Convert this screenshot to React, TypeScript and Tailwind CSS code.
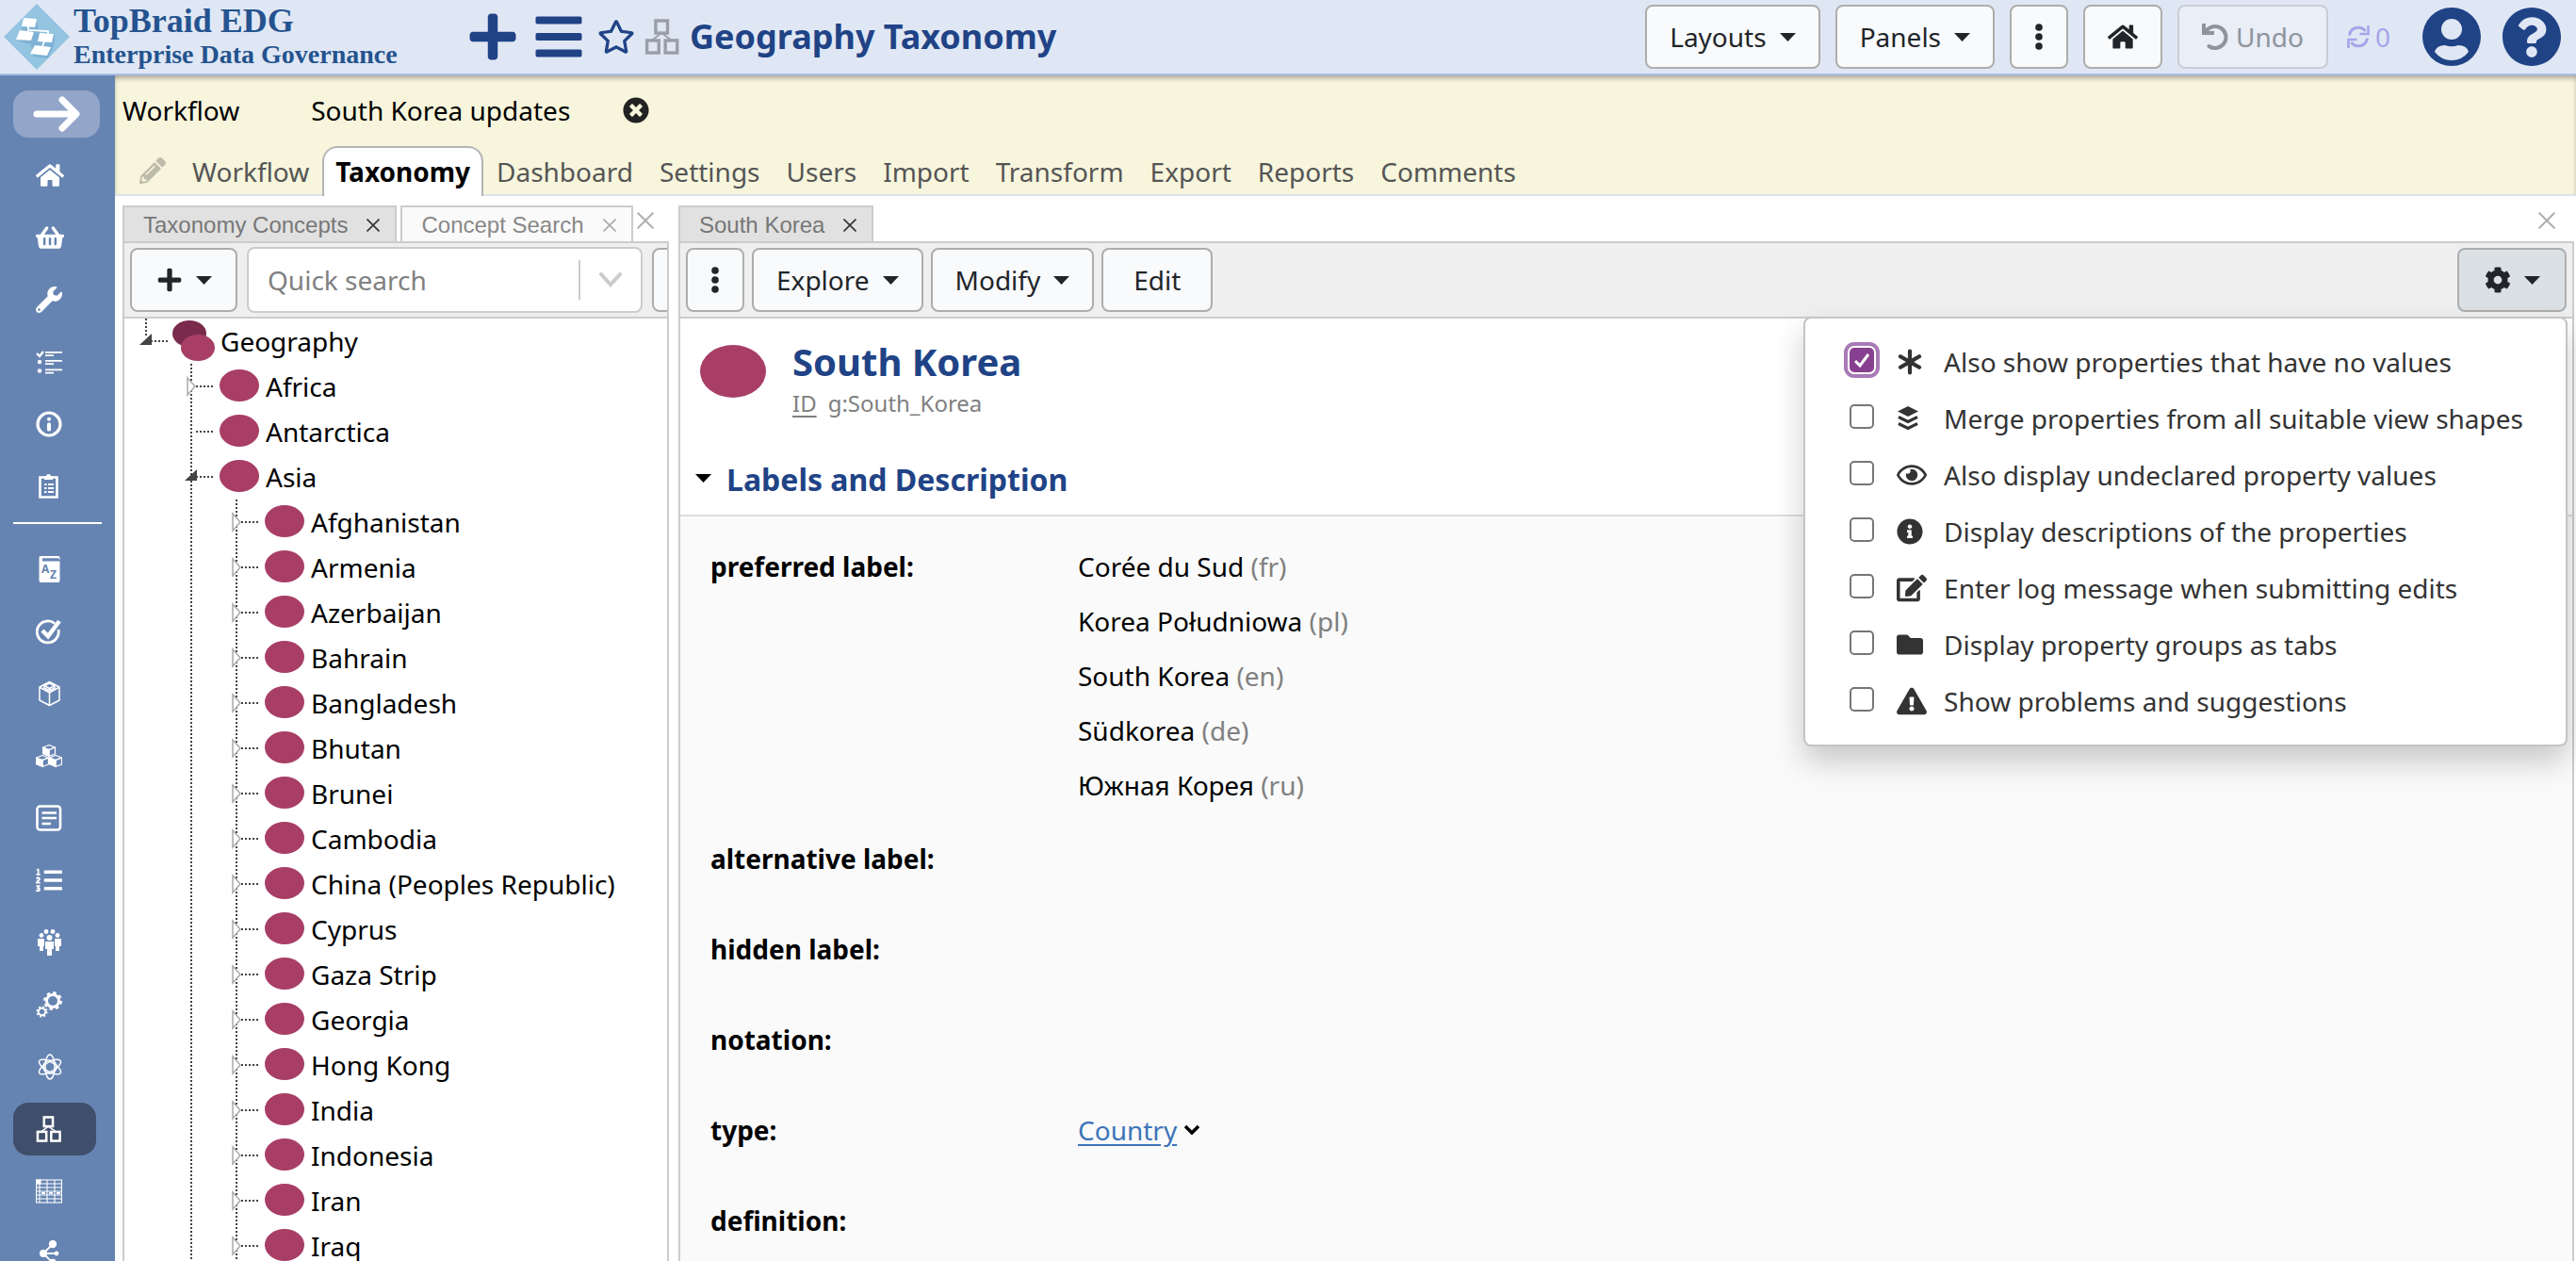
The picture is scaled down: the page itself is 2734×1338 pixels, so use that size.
import { type ReactNode } from 'react';
import {
  FaBars,
  FaCog,
  FaEdit,
  FaExclamationTriangle,
  FaFolder,
  FaHome,
  FaInfoCircle,
  FaListOl,
  FaPencilAlt,
  FaPlus,
  FaQuestionCircle,
  FaRegEye,
  FaRegStar,
  FaShoppingBasket,
  FaTimesCircle,
  FaWrench,
} from 'react-icons/fa';

// ============= Data =============

const NAV_TABS = ['Workflow', 'Taxonomy', 'Dashboard', 'Settings', 'Users', 'Import', 'Transform', 'Export', 'Reports', 'Comments'];

const COUNTRIES = [
  'Afghanistan', 'Armenia', 'Azerbaijan', 'Bahrain', 'Bangladesh', 'Bhutan', 'Brunei', 'Cambodia',
  'China (Peoples Republic)', 'Cyprus', 'Gaza Strip', 'Georgia', 'Hong Kong', 'India', 'Indonesia', 'Iran', 'Iraq',
];

const PREF_LABELS = [
  { text: 'Corée du Sud', lang: 'fr' },
  { text: 'Korea Południowa', lang: 'pl' },
  { text: 'South Korea', lang: 'en' },
  { text: 'Südkorea', lang: 'de' },
  { text: 'Южная Корея', lang: 'ru' },
];

// ============= Icons =============

function HierarchyIcon({ className }: { className?: string }) {
  return (
    <svg className={className} viewBox="0 0 28 29" fill="none" stroke="currentColor" strokeWidth={2.6}>
      <rect x="8.6" y="1.5" width="9.6" height="10" />
      <rect x="1.5" y="17.5" width="9.6" height="10" />
      <rect x="16.4" y="17.5" width="9.6" height="10" />
      <path d="M6 17l7.4-5.5L21 17" strokeWidth={1.4} />
    </svg>
  );
}

function LogoIcon() {
  return (
    <svg className="h-[70px] w-[70px] shrink-0" viewBox="0 0 70 70">
      <path d="M35 0l35 35-35 35L0 35z" fill="#93c4e0" />
      <path d="M21 18l14 1 3 12 16 1-1 12-6 14-16-2-2-13-13-3z" fill="#6fa5cd" opacity={0.6} />
      <g fill="#fff">
        <path d="M21 15l14 1-2 9-14-1z" />
        <path d="M17 28l15 2-3 9-16-1z" />
        <path d="M38 31l15 1-2 9-15-1z" />
        <path d="M33 44l17 2-4 9-18-2z" />
      </g>
      <path d="M26 24v4l21 1v4M43 40l-2 5" stroke="#fff" strokeWidth={1.8} fill="none" />
    </svg>
  );
}

const sideIcon = 'h-7 w-7';

function TaskListIcon() {
  return (
    <svg className={sideIcon} viewBox="0 0 28 28" fill="currentColor">
      <path d="M1 5l3 3 4-5" stroke="currentColor" strokeWidth={2.4} fill="none" />
      <circle cx="4" cy="14" r="2.2" />
      <circle cx="4" cy="23.5" r="2.2" />
      <path d="M10 3h18v1.8H10zM10 6.2h9V8h-9zM10 12h18v1.8H10zM10 15.2h9V17h-9zM10 21.5h18v1.8H10zM10 24.7h9v1.8h-9z" />
    </svg>
  );
}

function InfoRingIcon() {
  return (
    <svg className={sideIcon} viewBox="0 0 28 28" fill="currentColor">
      <circle cx="14" cy="14" r="12" fill="none" stroke="currentColor" strokeWidth={3.2} />
      <circle cx="14" cy="8.8" r="2" />
      <rect x="12" y="12.5" width="4" height="9" rx="1.5" />
    </svg>
  );
}

function ClipboardIcon() {
  return (
    <svg className={sideIcon} viewBox="0 0 28 28" fill="currentColor">
      <path d="M4.5 4.5h18v21h-18z" fill="none" stroke="currentColor" strokeWidth={2.6} />
      <path d="M9 7V3h2a2.6 2.6 0 015 0h2v4z" />
      <path d="M9 11h2.5v2H9zM13 11h6v2h-6zM9 15h2.5v2H9zM13 15h6v2h-6zM9 19h2.5v2H9zM13 19h6v2h-6z" />
    </svg>
  );
}

function GlossaryIcon() {
  return (
    <svg className={sideIcon} viewBox="0 0 28 28">
      <path d="M5 0h19q1.500 0 1.500 2v2.500q-.5-2-2-2.300H7v3.300h18.500V26q0 2-2 2H5.500q-2 0-2-2V2Q3.500 0 5 0z" fill="currentColor" />
      <text x="6" y="18" fontSize="12" className="fill-[#6684b2] font-bold">A</text>
      <text x="15" y="24" fontSize="12" className="fill-[#6684b2] font-bold">Z</text>
    </svg>
  );
}

function CheckRingIcon() {
  return (
    <svg className={sideIcon} viewBox="0 0 28 28" fill="none" stroke="currentColor">
      <path d="M20 5.500A11.500 11.500 0 1024 12" strokeWidth={2.8} />
      <path d="M7 13l6 6L25 3" strokeWidth={4.5} />
    </svg>
  );
}

function CubeIcon() {
  return (
    <svg className={sideIcon} viewBox="0 0 28 28" fill="none" stroke="currentColor" strokeWidth={1.5} strokeLinejoin="round">
      <path d="M14.5 1.5L25 7v14l-10.5 5.500L4 21V7zM4 7l10.500 6L25 7M14.500 13v13.500" />
      <path d="M9 5.500l5.500-2.500L20 5.500V8l-5.500 3L9 8zM9 5.500l5.500 3 5.500-3M14.500 8.500V11" />
    </svg>
  );
}

function CubesIcon() {
  return (
    <svg className={sideIcon} viewBox="0 0 28 28" fill="currentColor" stroke="currentColor" strokeLinejoin="round">
      {['translate(7.5 2)', 'translate(.5 13)', 'translate(14.5 13)'].map((t) => (
        <g key={t} transform={t}>
          <path d="M0 3l6.500-2.500L13 3l-6.500 2.500z" fill="none" strokeWidth={1.2} />
          <path d="M0 3l6.500 2.500v7L0 10z" />
          <path d="M13 3L6.500 5.500v7L13 10z" fill="none" strokeWidth={1.3} />
        </g>
      ))}
    </svg>
  );
}

function NoteIcon() {
  return (
    <svg className={sideIcon} viewBox="0 0 28 28" fill="none" stroke="currentColor" strokeWidth={2.6}>
      <rect x="1.5" y="1.5" width="24.5" height="25" rx="3" />
      <path d="M6.500 8.500H22M6.500 14H22M6.500 20H16" />
    </svg>
  );
}

function PeopleIcon() {
  return (
    <svg className={sideIcon} viewBox="0 0 28 28" fill="currentColor">
      <circle cx="11" cy="2.5" r="2.4" />
      <circle cx="18" cy="2.5" r="2.4" />
      <circle cx="6" cy="6.5" r="2.4" />
      <circle cx="23" cy="6.5" r="2.4" />
      <circle cx="14.5" cy="9" r="3" />
      <path d="M10 13h9v8h-2v7h-5v-7h-2zM2 10h7v8h-1v5H4v-5H2zM27 10h-7v8h1v5h4v-5h2z" />
    </svg>
  );
}

function GearsIcon() {
  return (
    <svg className={sideIcon} viewBox="0 0 28 28" fill="none" stroke="currentColor">
      <circle cx="18" cy="10" r="6.5" strokeWidth={3} />
      <circle cx="18" cy="10" r="8.7" strokeWidth={2.6} strokeDasharray="3.500 3.330" />
      <circle cx="6.5" cy="21.5" r="3.7" strokeWidth={2} />
      <circle cx="6.5" cy="21.5" r="5.2" strokeWidth={1.8} strokeDasharray="2.100 1.984" />
    </svg>
  );
}

function AtomIcon() {
  return (
    <svg className={sideIcon} viewBox="0 0 28 28" fill="none" stroke="currentColor" strokeWidth={1.5}>
      <ellipse cx="15" cy="14" rx="5" ry="13" />
      <ellipse cx="15" cy="14" rx="5" ry="13" transform="rotate(60 15 14)" />
      <ellipse cx="15" cy="14" rx="5" ry="13" transform="rotate(120 15 14)" />
      <circle cx="15" cy="14" r="7" />
    </svg>
  );
}

function GridIcon() {
  return (
    <svg className={sideIcon} viewBox="0 0 28 28" fill="none" stroke="currentColor" strokeWidth={1.1}>
      <rect x=".6" y="2" width="26.800" height="24" />
      <path d="M4 2v24M12 2v24M20 2v24M0 6h28M0 10h28M0 14h28M0 18h28M0 22h28" />
      <path d="M6 16h4M14 16h4M22 16h4" strokeWidth={2} />
      <path d="M0 2h5v4H0z" fill="currentColor" />
    </svg>
  );
}

function ShareIcon() {
  return (
    <svg className={sideIcon} viewBox="0 0 28 28" fill="currentColor">
      <circle cx="8" cy="14" r="4" />
      <circle cx="18" cy="4" r="4.2" />
      <circle cx="22" cy="14" r="2.4" />
      <circle cx="18" cy="24" r="4.2" />
      <path d="M8 14l10-10M8 14h14M8 14l10 10" stroke="currentColor" strokeWidth={1.8} />
    </svg>
  );
}

function AsteriskIcon() {
  return (
    <svg className="h-7 w-7" viewBox="0 0 28 28" fill="none" stroke="currentColor" strokeWidth={4.2} strokeLinecap="round">
      <path d="M14 2.500v23M4 8.300l20 11.400M24 8.300L4 19.700" />
    </svg>
  );
}

function LayersIcon() {
  return (
    <svg className="h-[26px] w-[26px]" viewBox="0 0 26 26" fill="currentColor">
      <path d="M12 0l11 5.500L12 11 1 5.500z" />
      <path d="M2 11.500l10 5 10-5M2 18.500l10 5 10-5" fill="none" stroke="currentColor" strokeWidth={3.2} />
    </svg>
  );
}

function DotsIcon() {
  return (
    <svg className="h-7 w-2" viewBox="0 0 8 28" fill="currentColor">
      <circle cx="4" cy="4" r="3.8" />
      <circle cx="4" cy="14" r="3.8" />
      <circle cx="4" cy="24" r="3.8" />
    </svg>
  );
}

function Caret() {
  return (
    <svg className="h-[9px] w-[17px]" viewBox="0 0 17 9" fill="currentColor">
      <path d="M0 0h17L8.500 9z" />
    </svg>
  );
}

function UndoIcon() {
  return (
    <svg className="h-7 w-7" viewBox="0 0 28 28" fill="none" stroke="currentColor" strokeWidth={4}>
      <path d="M2 0v10h11" />
      <path d="M4.500 8A11.500 11.500 0 117.500 24" strokeLinecap="round" />
    </svg>
  );
}

function UserIcon() {
  return (
    <svg className="h-[62px] w-[62px]" viewBox="0 0 62 62">
      <circle cx="31" cy="31" r="31" fill="#204386" />
      <circle cx="31" cy="23" r="11" fill="#e0e7f4" />
      <path d="M13 47q2-7 11-7 7 2.500 14 0 9 0 11 7-7 9-18 9t-18-9z" fill="#e0e7f4" />
    </svg>
  );
}

function RefreshIcon() {
  return (
    <svg className="h-6 w-6" viewBox="0 0 24 24" fill="none" stroke="currentColor" strokeWidth={3}>
      <path d="M2.500 10.500A9.500 9.500 0 0119.500 6M21.500 13.500A9.500 9.500 0 014.500 18" />
      <path d="M22.500 0v9h-9M1.500 24v-9h9" strokeWidth={2.6} />
    </svg>
  );
}

function CloseMark({ className }: { className: string }) {
  return (
    <svg className={className} viewBox="0 0 14 14" fill="none" stroke="currentColor" strokeWidth={1.6}>
      <path d="M.5.5l13 13M13.500.5l-13 13" />
    </svg>
  );
}

// ============= Shared controls =============

function ToolButton({ children, className = 'px-6', label }: { children: ReactNode; className?: string; label?: string }) {
  return (
    <button
      type="button"
      aria-label={label}
      className={`flex h-[68px] shrink-0 items-center justify-center gap-3.5 rounded-lg border-2 border-[#adadad] bg-[#f9fafc] text-[#212529] ${className}`}
    >
      {children}
    </button>
  );
}

function PanelTab({ title, active = false }: { title: string; active?: boolean }) {
  return (
    <div
      className={`flex h-10 items-center gap-5 border-2 border-b-0 border-[#ccc] pl-5 pr-4 font-['Liberation_Sans',sans-serif] text-[24px] ${
        active ? 'bg-[#e1e1e1] text-[#777]' : 'bg-[#fafafa] text-[#888]'
      }`}
    >
      {title}
      <button type="button" aria-label={`Close ${title}`} className={active ? 'text-[#333]' : 'text-[#aaa]'}>
        <CloseMark className="h-3.5 w-3.5" />
      </button>
    </div>
  );
}

// ============= Header =============

function Header() {
  return (
    <header className="flex h-20 shrink-0 items-center border-b-2 border-[#a9bee4] bg-[#e0e7f4] pr-[15px] pl-1">
      <LogoIcon />
      <div className="ml-1 w-[420px] font-['Liberation_Serif',serif] font-bold whitespace-nowrap text-[#24538f]">
        <div className="text-[36px] leading-[38px]">TopBraid EDG</div>
        <div className="text-[28px] leading-[34px]">Enterprise Data Governance</div>
      </div>
      <div className="flex items-center text-[#204386]">
        <button type="button" aria-label="New">
          <FaPlus className="h-14 w-[50px]" />
        </button>
        <button type="button" aria-label="Menu" className="ml-5">
          <FaBars className="h-14 w-[50px]" />
        </button>
        <button type="button" aria-label="Favorite" className="ml-4">
          <FaRegStar className="h-10 w-10" />
        </button>
        <HierarchyIcon className="ml-2.5 h-[38px] w-[38px] text-[#999ea8]" />
        <h1 className="ml-2.5 text-[36px] leading-none font-bold">Geography Taxonomy</h1>
      </div>
      <div className="ml-auto flex items-center gap-4">
        <ToolButton>Layouts <Caret /></ToolButton>
        <ToolButton>Panels <Caret /></ToolButton>
        <ToolButton label="More" className="w-[62px]"><DotsIcon /></ToolButton>
        <ToolButton label="Home" className="w-[84px]"><FaHome className="h-8 w-8" /></ToolButton>
        <button
          type="button"
          disabled
          className="flex h-[68px] items-center gap-2 rounded-lg border-2 border-[#c9cdd6] bg-[#e9eef7] px-6 text-[#8f949c]"
        >
          <UndoIcon />
          Undo
        </button>
        <div className="ml-1 flex items-center gap-1.5 text-[#a5a5ea]">
          <RefreshIcon />0
        </div>
        <button type="button" aria-label="Account" className="ml-[18px]">
          <UserIcon />
        </button>
        <button type="button" aria-label="Help" className="ml-1.5 text-[#204386]">
          <FaQuestionCircle className="h-16 w-16" />
        </button>
      </div>
    </header>
  );
}

// ============= Sidebar =============

const SIDE_TOP = [
  { name: 'Home', icon: <FaHome className="h-[30px] w-[30px]" /> },
  { name: 'Basket', icon: <FaShoppingBasket className="h-[30px] w-[30px]" /> },
  { name: 'Tools', icon: <FaWrench className={sideIcon} /> },
  { name: 'Tasks', icon: <TaskListIcon /> },
  { name: 'About', icon: <InfoRingIcon /> },
  { name: 'Reports', icon: <ClipboardIcon /> },
];

const SIDE_BOTTOM = [
  { name: 'Glossaries', icon: <GlossaryIcon /> },
  { name: 'Checks', icon: <CheckRingIcon /> },
  { name: 'Data', icon: <CubeIcon /> },
  { name: 'Collections', icon: <CubesIcon /> },
  { name: 'Content', icon: <NoteIcon /> },
  { name: 'Enumerations', icon: <FaListOl className={sideIcon} /> },
  { name: 'Governance', icon: <PeopleIcon /> },
  { name: 'Mappings', icon: <GearsIcon /> },
  { name: 'Ontologies', icon: <AtomIcon /> },
  { name: 'Taxonomies', icon: <HierarchyIcon className={sideIcon} />, active: true },
  { name: 'Reference data', icon: <GridIcon /> },
  { name: 'Share', icon: <ShareIcon /> },
];

function SideItem({ name, icon, active }: { name: string; icon: ReactNode; active?: boolean }) {
  return (
    <a href="#" aria-label={name} className="flex h-[66px] shrink-0 items-center pl-3.5 text-white">
      <span className={`flex h-14 w-[88px] items-center rounded-2xl pl-6 ${active ? 'bg-[#3f4f6b]' : ''}`}>{icon}</span>
    </a>
  );
}

function Sidebar() {
  return (
    <nav className="flex w-[122px] shrink-0 flex-col overflow-hidden bg-[#6684b2]">
      <button
        type="button"
        aria-label="Expand"
        className="mx-3.5 mt-4 mb-[7px] flex h-[50px] w-[92px] shrink-0 items-center justify-center rounded-2xl bg-[#93a6ca] text-white"
      >
        <svg className="h-[38px] w-[50px]" viewBox="0 0 50 38" fill="none" stroke="currentColor" strokeWidth={7} strokeLinecap="round" strokeLinejoin="round">
          <path d="M4 19h40M31 4l15 15-15 15" />
        </svg>
      </button>
      {SIDE_TOP.map((item) => <SideItem key={item.name} {...item} />)}
      <hr className="mx-3.5 mt-[5px] mb-[15px] shrink-0 border-t-2 border-white" />
      {SIDE_BOTTOM.map((item) => <SideItem key={item.name} {...item} />)}
    </nav>
  );
}

// ============= Workflow bar =============

function WorkflowBar() {
  return (
    <div className="flex h-32 shrink-0 flex-col justify-between border-b-2 border-[#dfe3ea] bg-[#f7f5dc] shadow-[inset_0_4px_6px_-2px_rgba(0,0,0,0.4)]">
      <div className="flex h-[76px] items-center pl-2 text-black">
        <span>Workflow</span>
        <span className="ml-[76px]">South Korea updates</span>
        <button type="button" aria-label="Leave workflow" className="ml-14 text-[#222]">
          <FaTimesCircle className="h-7 w-7" />
        </button>
      </div>
      <div className="-mb-0.5 flex h-[54px] items-stretch pl-[26px] text-[#555]">
        <FaPencilAlt className="mr-3.5 h-7 w-7 self-center text-[#bdbba9]" />
        {NAV_TABS.map((tab) => (
          <a
            key={tab}
            href="#"
            className={`flex items-center rounded-t-2xl border-2 border-b-0 px-3 ${
              tab === 'Taxonomy' ? 'border-[#b5b5b5] bg-white font-bold text-black' : 'border-transparent'
            }`}
          >
            {tab}
          </a>
        ))}
      </div>
    </div>
  );
}

// ============= Concept tree =============

type Guide = 'blank' | 'line' | 'root' | 'open' | 'closed' | 'leaf';

/** One 48px indent column: dotted connector plus the expander, if any */
function TreeGuide({ kind }: { kind: Guide }) {
  return (
    <svg className="h-12 w-12 shrink-0" viewBox="0 0 48 48" fill="none" stroke="#444" strokeWidth={2} strokeDasharray="2 2">
      {kind !== 'blank' && <path d={kind === 'root' ? 'M23 0v18' : 'M23 0v48'} />}
      {kind !== 'blank' && kind !== 'line' && <path d="M28 24h21" />}
      {(kind === 'open' || kind === 'root') && <path d="M16 28h13V16z" fill="#444" stroke="none" />}
      {kind === 'closed' && <path d="M19 15v18l8-9z" fill="#fff" stroke="#aaa" strokeWidth={1.5} strokeDasharray="none" />}
    </svg>
  );
}

function TreeRow({ label, guides, scheme = false }: { label: string; guides: Guide[]; scheme?: boolean }) {
  return (
    <li className="flex h-12 items-center whitespace-nowrap text-black">
      {guides.map((g, i) => <TreeGuide key={i} kind={g} />)}
      <svg className="h-12 w-[54px] shrink-0" viewBox="0 0 54 48">
        {scheme ? (
          <>
            <ellipse cx="21" cy="16" rx="18" ry="14" fill="#7a2b4b" />
            <ellipse cx="30" cy="31" rx="18" ry="14" fill="#a83e66" />
          </>
        ) : (
          <ellipse cx="26" cy="23" rx="21" ry="17" fill="#a83e66" />
        )}
      </svg>
      {label}
    </li>
  );
}

function ConceptPanel() {
  return (
    <section className="flex w-[580px] shrink-0 flex-col">
      <div className="flex h-10 shrink-0 items-start gap-1">
        <PanelTab title="Taxonomy Concepts" active />
        <PanelTab title="Concept Search" />
        <button type="button" aria-label="Close panel" className="mt-[7px] text-[#b0b0b0]">
          <CloseMark className="h-[18px] w-[18px]" />
        </button>
      </div>
      <div className="-mt-0.5 flex min-h-0 grow flex-col border-x-2 border-[#ccc]">
        <div className="flex h-[82px] shrink-0 items-center gap-2.5 overflow-hidden border-y-2 border-[#ccc] bg-[#efefef] pl-1.5">
          <ToolButton label="Add" className="w-[114px]">
            <FaPlus className="h-7 w-7" />
            <Caret />
          </ToolButton>
          <div className="flex h-[70px] w-[420px] shrink-0 items-center rounded-lg border-2 border-[#ccc] bg-white">
            <input
              type="text"
              aria-label="Quick search"
              placeholder="Quick search"
              className="h-full w-[350px] bg-transparent px-5 outline-none placeholder:text-[#808080]"
            />
            <span className="h-[42px] w-0.5 bg-[#ccc]" />
            <svg className="ml-5 h-4 w-6 text-[#ccc]" viewBox="0 0 24 16" fill="none" stroke="currentColor" strokeWidth={4} strokeLinecap="round">
              <path d="M2 2l10 11L22 2" />
            </svg>
          </div>
          <ToolButton label="Search options" className="w-[62px]"><DotsIcon /></ToolButton>
        </div>
        <ul className="min-h-0 grow overflow-hidden">
          <TreeRow label="Geography" guides={['root']} scheme />
          <TreeRow label="Africa" guides={['blank', 'closed']} />
          <TreeRow label="Antarctica" guides={['blank', 'leaf']} />
          <TreeRow label="Asia" guides={['blank', 'open']} />
          {COUNTRIES.map((c) => <TreeRow key={c} label={c} guides={['blank', 'line', 'closed']} />)}
        </ul>
      </div>
    </section>
  );
}

// ============= Settings menu =============

const MENU_ITEMS = [
  { label: 'Also show properties that have no values', icon: <AsteriskIcon />, checked: true },
  { label: 'Merge properties from all suitable view shapes', icon: <LayersIcon /> },
  { label: 'Also display undeclared property values', icon: <FaRegEye className="h-[30px] w-[32px]" /> },
  { label: 'Display descriptions of the properties', icon: <FaInfoCircle className="h-7 w-7" /> },
  { label: 'Enter log message when submitting edits', icon: <FaEdit className="h-[30px] w-[32px]" /> },
  { label: 'Display property groups as tabs', icon: <FaFolder className="h-7 w-7" /> },
  { label: 'Show problems and suggestions', icon: <FaExclamationTriangle className="h-[30px] w-[32px]" /> },
];

function SettingsMenu() {
  return (
    <div className="absolute top-[118px] right-[7px] z-10 rounded-lg border-2 border-[#c4c4c4] bg-white py-4 pr-[45px] pl-[47px] text-[#333] shadow-[0_16px_32px_rgba(0,0,0,0.2)]">
      {MENU_ITEMS.map((item) => (
        <label key={item.label} className="flex h-[60px] items-center whitespace-nowrap">
          <span className="relative mb-1 flex h-[26px] w-[26px] items-center justify-center">
            <input
              type="checkbox"
              defaultChecked={item.checked}
              className="peer absolute h-[26px] w-[26px] appearance-none rounded-[5px] border-2 border-[#767676] bg-white checked:border-[#87408f] checked:bg-[#87408f] checked:ring-4 checked:ring-[#a97ab5] checked:ring-offset-2"
            />
            <svg className="pointer-events-none relative hidden h-4 w-4 peer-checked:block" viewBox="0 0 16 16" fill="none" stroke="#fff" strokeWidth={3}>
              <path d="M1 9l5 5L15 2" />
            </svg>
          </span>
          <span className="ml-6 flex w-[50px] items-center">{item.icon}</span>
          {item.label}
        </label>
      ))}
    </div>
  );
}

// ============= Resource form =============

function PropertyRow({ name, className = 'mb-[38px]', children }: { name: string; className?: string; children?: ReactNode }) {
  return (
    <div className={`flex leading-[58px] ${className}`}>
      <dt className="w-[390px] shrink-0 font-bold">{name}:</dt>
      <dd>{children}</dd>
    </div>
  );
}

function ResourcePanel() {
  return (
    <section className="relative flex min-w-0 grow flex-col">
      <div className="flex h-10 shrink-0 items-start justify-between pr-5">
        <PanelTab title="South Korea" active />
        <button type="button" aria-label="Close panel" className="mt-[7px] text-[#b0b0b0]">
          <CloseMark className="h-[18px] w-[18px]" />
        </button>
      </div>
      <div className="-mt-0.5 flex min-h-0 grow flex-col overflow-hidden border-x-2 border-[#ccc]">
        <div className="flex h-[82px] shrink-0 items-center gap-2 border-y-2 border-[#ccc] bg-[#efefef] px-1.5">
          <ToolButton label="More" className="w-[62px]"><DotsIcon /></ToolButton>
          <ToolButton>Explore <Caret /></ToolButton>
          <ToolButton>Modify <Caret /></ToolButton>
          <ToolButton className="px-8">Edit</ToolButton>
          <button
            type="button"
            aria-label="Settings"
            className="ml-auto flex h-[68px] w-[116px] items-center justify-center gap-3.5 rounded-lg border-2 border-[#adadad] bg-[#dbe0e4] text-[#212529]"
          >
            <FaCog className="h-7 w-7" />
            <Caret />
          </button>
        </div>
        <div className="flex h-[134px] shrink-0 pt-5 pl-[21px]">
          <svg className="mt-2 h-14 w-[70px]" viewBox="0 0 70 56">
            <ellipse cx="35" cy="28" rx="35" ry="28" fill="#a83e66" />
          </svg>
          <div className="ml-7">
            <h2 className="text-[40px] leading-[52px] font-bold text-[#204386]">South Korea</h2>
            <div className="text-[24px] leading-9 text-[#808080]">
              <span className="mr-3 underline underline-offset-4">ID</span>
              g:South_Korea
            </div>
          </div>
        </div>
        <h3 className="flex h-[76px] shrink-0 items-center border-b-2 border-[#ddd] pl-4 text-[32px] font-bold text-[#204386]">
          <span className="mr-4 mb-1 text-black"><Caret /></span>
          Labels and Description
        </h3>
        <dl className="min-h-0 grow bg-[#fafafa] pt-6 pl-8 text-black">
          <PropertyRow name="preferred label" className="mb-5">
            {PREF_LABELS.map((l) => (
              <div key={l.lang}>
                {l.text} <span className="text-[#808080]">({l.lang})</span>
              </div>
            ))}
          </PropertyRow>
          <PropertyRow name="alternative label" />
          <PropertyRow name="hidden label" />
          <PropertyRow name="notation" />
          <PropertyRow name="type">
            <span className="flex items-center gap-2">
              <a href="#" className="text-[#3d74b8] underline underline-offset-4">Country</a>
              <svg className="h-3 w-4" viewBox="0 0 16 12" fill="none" stroke="currentColor" strokeWidth={3.5}>
                <path d="M1 2l7 7 7-7" />
              </svg>
            </span>
          </PropertyRow>
          <PropertyRow name="definition" />
        </dl>
      </div>
      <SettingsMenu />
    </section>
  );
}

export default function App() {
  return (
    <div className="flex h-screen flex-col overflow-hidden bg-white font-['Noto_Sans',sans-serif] text-[28px] leading-none">
      <Header />
      <div className="flex min-h-0 grow">
        <Sidebar />
        <main className="flex min-w-0 grow flex-col">
          <WorkflowBar />
          <div className="flex min-h-0 grow gap-2.5 pt-2.5 pr-0.5 pl-2">
            <ConceptPanel />
            <ResourcePanel />
          </div>
        </main>
      </div>
    </div>
  );
}
